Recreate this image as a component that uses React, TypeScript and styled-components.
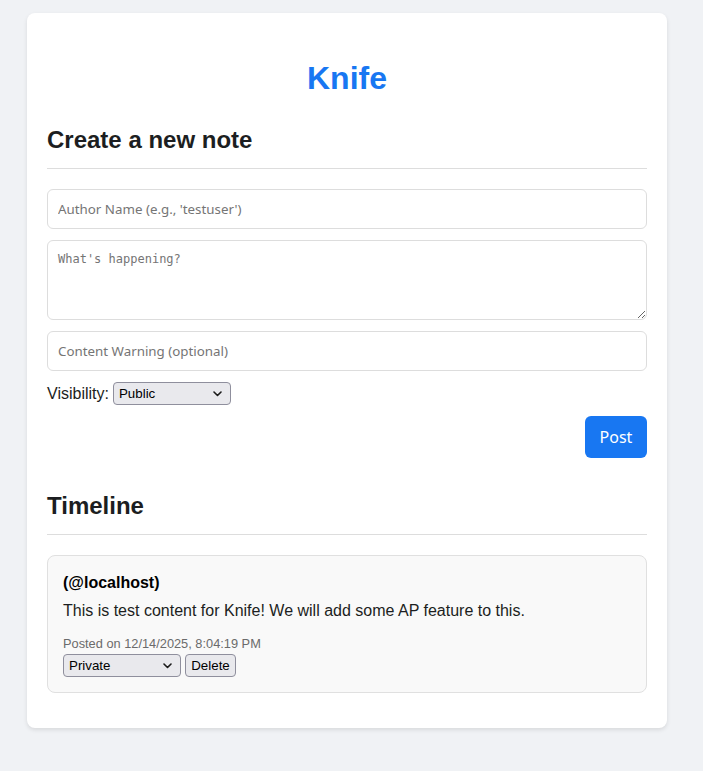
import React from "react";
import styled, { createGlobalStyle } from "styled-components";

const Global = createGlobalStyle`
  html, body {
    margin: 0;
    padding: 0;
    background: #f0f2f5;
    font-family: "Liberation Sans", Arial, sans-serif;
    color: #1c1e21;
  }
`;

const Page = styled.div`
  padding: 13px 0 43px 27px;
`;

const Card = styled.main`
  width: 640px;
  box-sizing: border-box;
  background: #ffffff;
  border-radius: 8px;
  box-shadow: 0 2px 4px rgba(0, 0, 0, 0.1);
  padding: 20px 20px 35px;
`;

const Title = styled.h1`
  margin: 27px 0 29px;
  text-align: center;
  color: #1877f2;
  font-size: 32px;
  line-height: 37px;
  font-weight: bold;
`;

const SectionHeading = styled.h2<{ $top: number }>`
  margin: ${(p) => p.$top}px 0 20px;
  font-size: 24px;
  line-height: 28px;
  font-weight: bold;
  padding-bottom: 14px;
  border-bottom: 1px solid #dddddd;
`;

const Form = styled.form`
  display: flex;
  flex-direction: column;
  gap: 11px;
`;

const fieldBase = `
  box-sizing: border-box;
  width: 100%;
  border: 1px solid #dddddd;
  border-radius: 6px;
  padding: 10px;
  background: #fff;
  color: #1c1e21;
  outline: none;
  &::placeholder { color: #757575; }
`;

const TextInput = styled.input`
  ${fieldBase}
  height: 40px;
  font-family: "Noto Sans", sans-serif;
  font-size: 13.33px;
`;

const TextArea = styled.textarea`
  ${fieldBase}
  height: 80px;
  display: block;
  resize: vertical;
  font-family: "DejaVu Sans Mono", monospace;
  font-size: 12px;
  padding-top: 11px;
`;

const VisibilityRow = styled.div`
  display: flex;
  align-items: center;
  gap: 4px;
  font-size: 16px;
  height: 23px;
`;

const SelectWrap = styled.span`
  position: relative;
  display: inline-flex;
`;

const Select = styled.select`
  appearance: none;
  -webkit-appearance: none;
  box-sizing: border-box;
  width: 118px;
  height: 23px;
  padding: 0 20px 0 5px;
  border: 1px solid #8f8f9d;
  border-radius: 4px;
  background: #e9e9ed;
  font-family: "Liberation Sans", Arial, sans-serif;
  font-size: 13.33px;
  color: #000;
  outline: none;
`;

const Chevron = styled.svg`
  position: absolute;
  right: 9px;
  top: 9px;
  width: 9px;
  height: 6px;
  pointer-events: none;
`;

const Actions = styled.div`
  display: flex;
  justify-content: flex-end;
`;

const PostButton = styled.button`
  height: 42px;
  width: 62px;
  padding: 0;
  border: none;
  border-radius: 6px;
  background: #1877f2;
  color: #ffffff;
  font-family: "Noto Sans", sans-serif;
  font-size: 16px;
  cursor: pointer;
`;

const Note = styled.article`
  background: #f9f9f9;
  border: 1px solid #e0e0e0;
  border-radius: 8px;
  padding: 15px;
  display: flex;
  flex-direction: column;
`;

const NoteAuthor = styled.div`
  margin-top: 2px;
  font-size: 16px;
  line-height: 20px;
  font-weight: bold;
  color: #000;
`;

const NoteContent = styled.p`
  margin: 9px 0 0;
  font-size: 16px;
  line-height: 18px;
  color: #1c1e21;
`;

const NoteMeta = styled.div`
  margin-top: 16px;
  font-size: 12.8px;
  line-height: 15px;
  color: #6b6b6b;
`;

const NoteControls = styled.div`
  margin-top: 3px;
  display: flex;
  gap: 4px;
`;

const SmallButton = styled.button`
  box-sizing: border-box;
  height: 23px;
  width: 51px;
  padding: 0;
  border: 1px solid #8f8f9d;
  border-radius: 4px;
  background: #e9e9ed;
  font-family: "Liberation Sans", Arial, sans-serif;
  font-size: 13.33px;
  color: #000;
`;

function VisibilitySelect({ id, value }: { id?: string; value: string }) {
  return (
    <SelectWrap>
      <Select id={id} defaultValue={value}>
        <option value="public">Public</option>
        <option value="unlisted">Unlisted</option>
        <option value="followers">Followers only</option>
        <option value="private">Private</option>
      </Select>
      <Chevron viewBox="0 0 9 6">
        <polyline
          points="1,1 4.5,4.5 8,1"
          fill="none"
          stroke="#1b1b1b"
          strokeWidth="1.6"
          strokeLinecap="round"
          strokeLinejoin="round"
        />
      </Chevron>
    </SelectWrap>
  );
}

export default function App() {
  return (
    <>
      <Global />
      <Page>
        <Card>
          <Title>Knife</Title>
          <SectionHeading $top={0}>Create a new note</SectionHeading>
          <Form onSubmit={(e) => e.preventDefault()}>
            <TextInput placeholder="Author Name (e.g., 'testuser')" />
            <TextArea placeholder="What's happening?" />
            <TextInput placeholder="Content Warning (optional)" />
            <VisibilityRow>
              <label htmlFor="vis">Visibility:</label>
              <VisibilitySelect id="vis" value="public" />
            </VisibilityRow>
            <Actions>
              <PostButton type="submit">Post</PostButton>
            </Actions>
          </Form>
          <SectionHeading $top={34}>Timeline</SectionHeading>
          <Note>
            <NoteAuthor>(@localhost)</NoteAuthor>
            <NoteContent>
              This is test content for Knife! We will add some AP feature to this.
            </NoteContent>
            <NoteMeta>Posted on 12/14/2025, 8:04:19 PM</NoteMeta>
            <NoteControls>
              <VisibilitySelect value="private" />
              <SmallButton type="button">Delete</SmallButton>
            </NoteControls>
          </Note>
        </Card>
      </Page>
    </>
  );
}
